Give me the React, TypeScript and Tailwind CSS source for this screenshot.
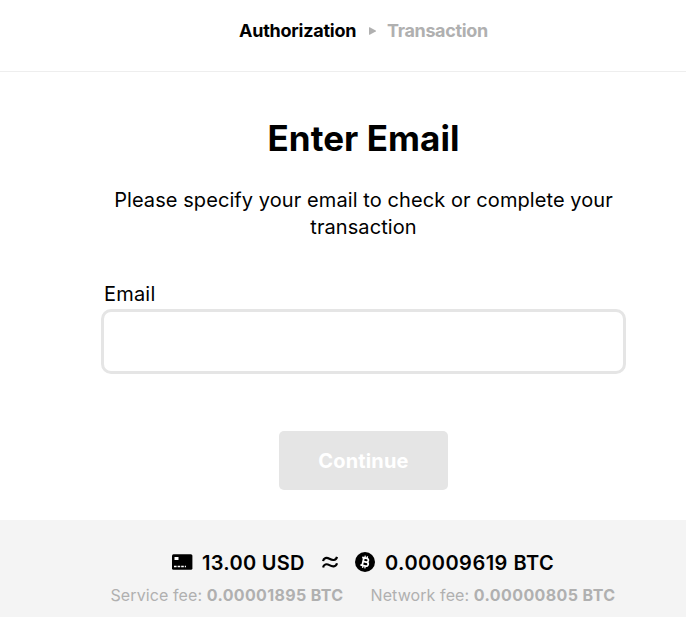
import React from "react";

function CardIcon() {
  return (
    <svg width="21" height="16" viewBox="0 0 21 16" className="shrink-0">
      <rect y="0.3" width="20.4" height="15.4" rx="1.5" fill="#000" />
      <path d="M2.5 3h4v3h-4z" fill="#fff" />
      <path d="M2 12.5h2.6M5.6 12.5h2.6M9.2 12.5h2.6M12.8 12.5h1.2" stroke="#fff" strokeWidth="1.5" />
    </svg>
  );
}

function ApproxIcon() {
  return (
    <svg width="16" height="13" viewBox="0 0 16 13" className="shrink-0">
      <path
        d="M1.1 5.2C1.5 1.8 4.6 1.2 7.4 2.8S13.8 5 15 .9M1.1 11.5C1.5 8.1 4.6 7.5 7.4 9.1S13.8 11.3 15 7.2"
        fill="none"
        stroke="#000"
        strokeWidth="2.2"
      />
    </svg>
  );
}

function BitcoinIcon() {
  return (
    <svg width="20" height="20" viewBox="0 0 20 20" className="shrink-0">
      <circle cx="10" cy="10" r="10" fill="#000" />
      <g transform="rotate(13 10 10)" fill="none" stroke="#fff">
        <path d="M6.2 6.1h4.9a1.85 1.85 0 0 1 0 3.7H8.2M11.1 9.8h.5a2.05 2.05 0 0 1 0 4.1H6.2M8 6.1v7.8" strokeWidth="1.8" />
        <path d="M8.9 3.8v2.2M11.2 3.8v2.2M8.9 14v2.2M11.2 14v2.2" strokeWidth="1.3" />
      </g>
    </svg>
  );
}

export default function App() {
  return (
    <div className="flex h-[617px] w-[686px] flex-col overflow-hidden bg-white font-['Inter',sans-serif] text-black">
      <header className="flex h-[72px] shrink-0 justify-center border-b border-[#eeeeee] pt-[17px] pl-[42px] text-[18px] leading-[27px] font-bold whitespace-nowrap">
        <span className="w-[118px] tracking-[-0.24px]">Authorization</span>
        <svg width="7" height="8" viewBox="0 0 7 8" className="mr-[11px] ml-3 mt-[10px]"><path d="M0 .5Q0 0 .7.3L6.7 3.5Q7.3 4 6.7 4.5L.7 7.7Q0 8 0 7.5z" fill="#b0b0b0" /></svg>
        <span className="w-[102px] tracking-[-0.34px] text-[#b0b0b0]">Transaction</span>
      </header>
      <main className="flex h-[448px] shrink-0 flex-col items-center pl-[41px]">
        <h1 className="mt-11 text-[35px] leading-[44px] font-bold tracking-[0.05px]">Enter Email</h1>
        <p className="mt-[27px] text-center text-[20px] leading-[27px] tracking-[0.08px]">Please specify your email to check or complete your<br />transaction</p>
        <label className="mt-[39px] flex w-[525px] flex-col text-[20px] leading-[28px]">
          <span className="pl-[3px] tracking-[0.2px]">Email</span>
          <input className="mt-px h-[65px] rounded-[10px] border-[3px] border-[#e5e5e5] px-4 outline-none" />
        </label>
        <button className="mt-[57px] h-[59px] w-[169px] rounded-[5px] bg-[#e5e5e5] text-[20px] font-bold tracking-[0.15px] text-white">Continue</button>
      </main>
      <footer className="flex h-[97px] shrink-0 flex-col items-center bg-[#f4f4f4] pt-[28px] pl-[41px] whitespace-nowrap">
        <div className="flex h-[28px] items-center text-[20px] font-semibold">
          <CardIcon />
          <span className="mt-px ml-[9px] w-[103px] tracking-[0.3px]">13.00 USD</span>
          <span className="ml-[17px] w-[16px]"><ApproxIcon /></span>
          <span className="ml-[17px]"><BitcoinIcon /></span>
          <span className="mt-px ml-[10px] w-[170px] tracking-[0.48px]">0.00009619 BTC</span>
        </div>
        <div className="mt-[7px] flex text-[16px] leading-6 text-[#b0b0b0]">
          <span className="w-[260px]"><span className="tracking-[0.1px]">Service fee: </span><b className="font-bold tracking-[0.35px]">0.00001895 BTC</b></span>
          <span className="w-[246px]"><span className="tracking-[0.1px]">Network fee: </span><b className="font-bold tracking-[0.4px]">0.00000805 BTC</b></span>
        </div>
      </footer>
    </div>
  );
}
